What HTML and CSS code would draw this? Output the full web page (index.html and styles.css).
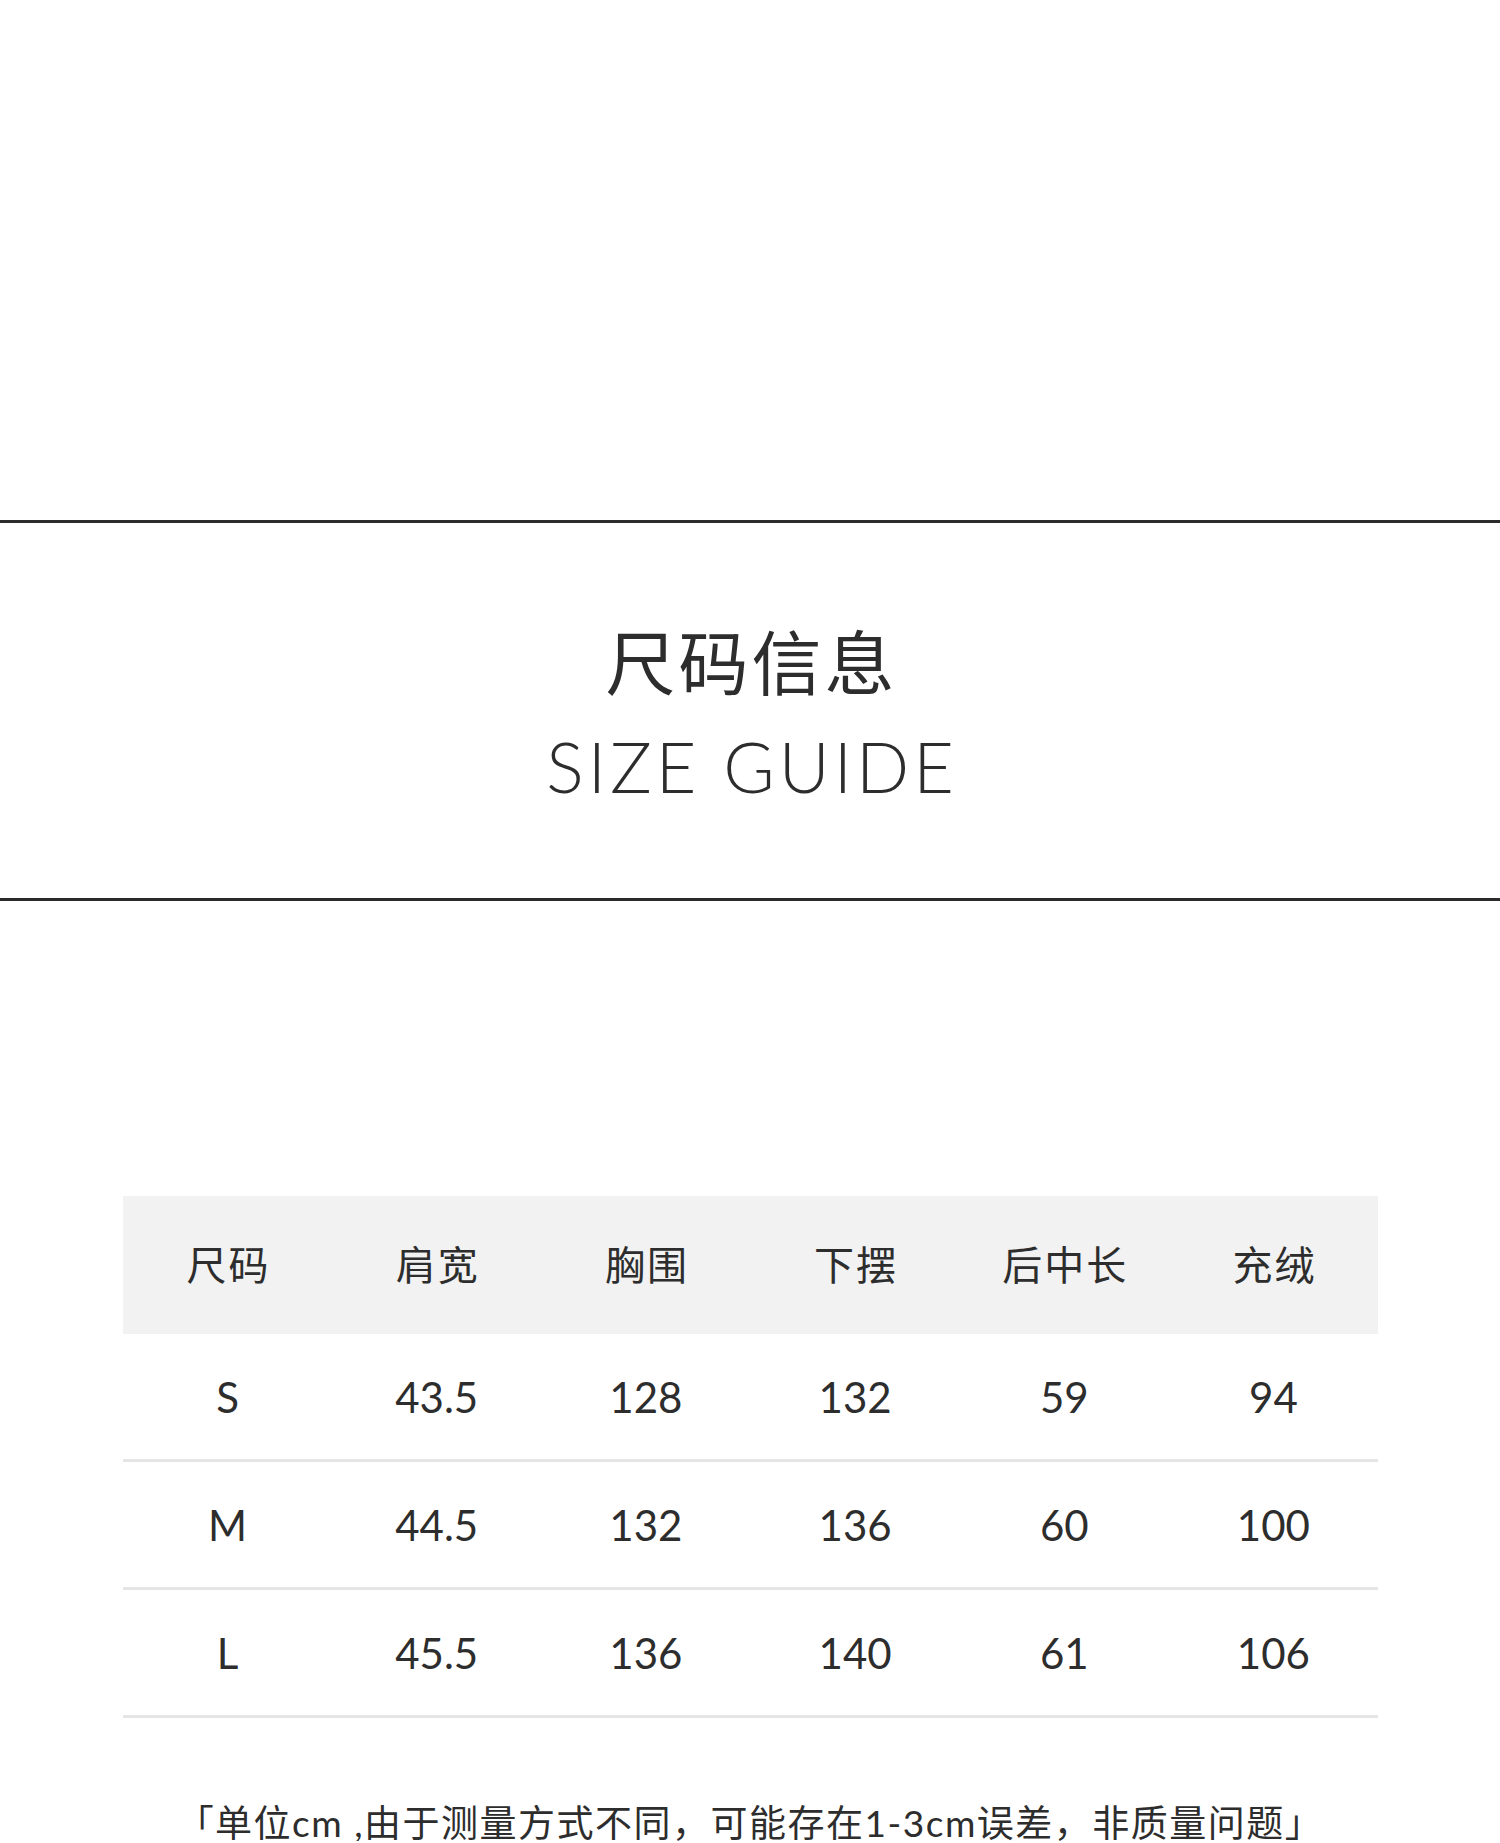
FILE: index.html
```html
<!DOCTYPE html>
<html lang="zh-CN">
<head>
<meta charset="utf-8">
<title>尺码信息 SIZE GUIDE</title>
<link rel="stylesheet" href="styles.css">
</head>
<body>
<div class="page">
  <div class="top-space"></div>
  <section class="banner">
    <h1 class="title-cn">尺码信息</h1>
    <h2 class="title-en">SIZE GUIDE</h2>
  </section>
  <section class="table">
    <div class="row head">
      <div class="cell">尺码</div>
      <div class="cell">肩宽</div>
      <div class="cell">胸围</div>
      <div class="cell">下摆</div>
      <div class="cell">后中长</div>
      <div class="cell">充绒</div>
    </div>
    <div class="row">
      <div class="cell">S</div>
      <div class="cell">43.5</div>
      <div class="cell">128</div>
      <div class="cell">132</div>
      <div class="cell">59</div>
      <div class="cell">94</div>
    </div>
    <div class="row">
      <div class="cell">M</div>
      <div class="cell">44.5</div>
      <div class="cell">132</div>
      <div class="cell">136</div>
      <div class="cell">60</div>
      <div class="cell">100</div>
    </div>
    <div class="row">
      <div class="cell">L</div>
      <div class="cell">45.5</div>
      <div class="cell">136</div>
      <div class="cell">140</div>
      <div class="cell">61</div>
      <div class="cell">106</div>
    </div>
  </section>
  <p class="note">「单位cm ,由于测量方式不同，可能存在1-3cm误差，非质量问题」</p>
</div>
</body>
</html>
```

FILE: styles.css
```css
html, body {
  margin: 0;
  padding: 0;
  background: #ffffff;
}

.page {
  width: 1500px;
  color: #2d2d2d;
  font-family: "Lato", "Noto Sans CJK SC", sans-serif;
}

.top-space {
  height: 520px;
}

.banner {
  border-top: 3px solid #2b2b2b;
  border-bottom: 3px solid #2b2b2b;
  height: 375px;
  box-sizing: content-box;
  display: flex;
  flex-direction: column;
  align-items: center;
  padding: 0;
}

.title-cn {
  margin: 102px 0 0 0;
  font-family: "Noto Sans CJK SC", sans-serif;
  font-weight: 400;
  font-size: 70px;
  line-height: 70px;
  letter-spacing: 3px;
  padding-left: 3px;
}

.title-en {
  margin: 36px 0 0 0;
  font-family: "Lato", sans-serif;
  font-weight: 300;
  font-size: 70px;
  line-height: 70px;
  letter-spacing: 4px;
  padding-left: 4px;
}

.table {
  margin: 295px 122px 0 123px;
}

.row {
  display: grid;
  grid-template-columns: repeat(6, 1fr);
  height: 125px;
  border-bottom: 3px solid #e5e5e5;
  align-items: center;
  font-family: "Lato", sans-serif;
  font-size: 42px;
}

.row.head {
  height: 138px;
  background: #f2f2f2;
  border-bottom: none;
  font-family: "Noto Sans CJK SC", sans-serif;
  font-size: 40px;
  letter-spacing: 2px;
}

.cell {
  text-align: center;
  line-height: 1;
}

.row.head .cell {
  padding-left: 2px;
  padding-bottom: 4px;
}

.note {
  margin: 86px 0 0 0;
  text-align: center;
  font-family: "Lato", "Noto Sans CJK SC", sans-serif;
  font-size: 37px;
  line-height: 37px;
  letter-spacing: 1.5px;
}
```
